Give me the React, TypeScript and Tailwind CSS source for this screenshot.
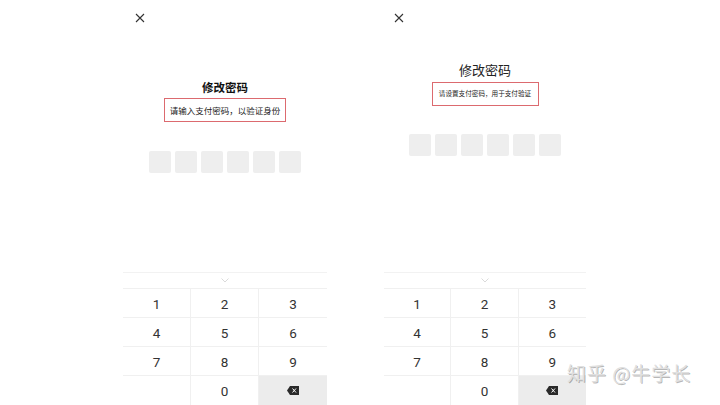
import React from "react";

const font = { fontFamily: '"Noto Sans CJK SC", "Noto Sans", sans-serif' };

function CloseIcon() {
  return (
    <svg width="10" height="10" viewBox="0 0 10 10">
      <path d="M1 1 L9 9 M9 1 L1 9" stroke="#333" strokeWidth="1.1" fill="none" />
    </svg>
  );
}

function Backspace() {
  return (
    <svg width="12" height="9" viewBox="0 0 12 9">
      <path d="M3 0 H12 V9 H3 L0 4.5 Z" fill="#2a2a2a" />
      <path d="M5.5 2.5 L9 6.5 M9 2.5 L5.5 6.5" stroke="#fff" strokeWidth="1" />
    </svg>
  );
}

function Keyboard() {
  const rows = [
    ["1", "2", "3"],
    ["4", "5", "6"],
    ["7", "8", "9"],
    ["", "0", "del"],
  ];
  return (
    <div className="flex flex-col border-t border-[#f2f2f2]">
      <div className="h-[16px] flex items-center justify-center border-b border-[#f0f0f0]">
        <svg width="8" height="5" viewBox="0 0 8 5">
          <path d="M0.5 0.5 L4 4 L7.5 0.5" stroke="#d0d0d0" strokeWidth="0.8" fill="none" />
        </svg>
      </div>
      {rows.map((r, i) => (
        <div key={i} className={`grid grid-cols-3 h-[29px] ${i < 3 ? "border-b border-[#f0f0f0]" : ""}`}>
          {r.map((k, j) => (
            <div
              key={j}
              className={`flex items-center justify-center text-[13.5px] text-[#333] ${j < 2 ? "border-r border-[#f0f0f0]" : ""} ${k === "del" ? "bg-[#ececec]" : "pt-[2px]"}`}
              style={{ fontFamily: 'Roboto, "Noto Sans", sans-serif' }}
            >
              {k === "del" ? <Backspace /> : k}
            </div>
          ))}
        </div>
      ))}
    </div>
  );
}

function Boxes() {
  return (
    <div className="flex justify-center gap-[4px]">
      {[0, 1, 2, 3, 4, 5].map((i) => (
        <div key={i} className="w-[22px] h-[22px] rounded-[2px] bg-[#eeeeee]" />
      ))}
    </div>
  );
}

export default function App() {
  return (
    <div className="relative w-[720px] h-[405px] bg-white overflow-hidden flex pl-[123px] gap-[57px]" style={font}>
      {/* left panel */}
      <div className="w-[204px] h-[405px] flex flex-col">
        <div className="h-[36px] pl-[12px] flex items-center">
          <CloseIcon />
        </div>
        <div className="h-[44px]" />
        <div className="text-center text-[11.5px] font-bold text-[#111] leading-[14px]">修改密码</div>
        <div className="flex justify-center mt-[4px]">
          <div className="border-[1.5px] border-[#dc6a6f] h-[24px] w-[122px] flex items-center justify-center text-[8.5px] text-[#222]">
            请输入支付密码，以验证身份
          </div>
        </div>
        <div className="mt-[29px]">
          <Boxes />
        </div>
        <div className="flex-1" />
        <Keyboard />
      </div>
      {/* right panel */}
      <div className="w-[202px] h-[405px] flex flex-col">
        <div className="h-[36px] pl-[10px] flex items-center">
          <CloseIcon />
        </div>
        <div className="h-[25px]" />
        <div className="text-center text-[13px] text-[#222] leading-[18px]">修改密码</div>
        <div className="flex justify-center mt-[3px]">
          <div className="border-[1.5px] border-[#dc6a6f] h-[24px] w-[107px] flex items-center justify-center text-[6.6px] text-[#222]">
            请设置支付密码，用于支付验证
          </div>
        </div>
        <div className="mt-[28px]">
          <Boxes />
        </div>
        <div className="flex-1" />
        <Keyboard />
      </div>
      <div
        className="absolute left-[567px] top-[360px] text-[19px] text-[#e0e0e0] leading-[26px] tracking-[1px]"
        style={{ textShadow: "1px 1px 0.5px rgba(0,0,0,0.28)" }}
      >
        知乎 @牛学长
      </div>
    </div>
  );
}
